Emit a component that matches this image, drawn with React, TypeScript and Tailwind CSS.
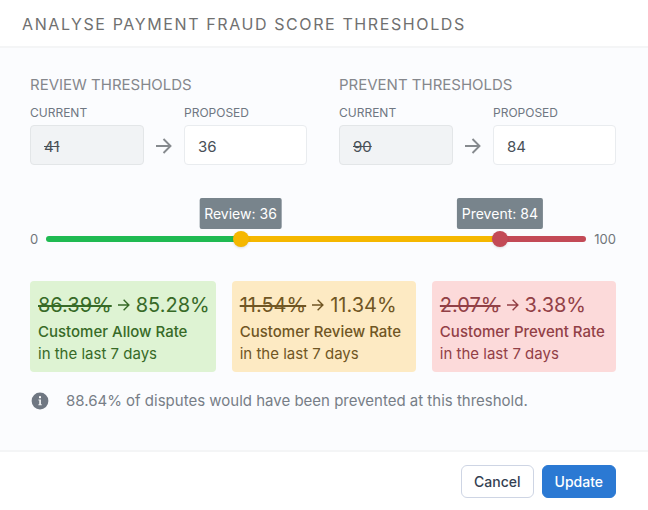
import { useId, useState } from "react";

function Arrow({ className }: { className: string }) {
  return (
    <svg viewBox="0 0 16 16" fill="none" stroke="currentColor" aria-hidden="true" className={className}>
      <path d="M0 8H15M7.5 1L14.5 8L7.5 15" strokeWidth="1.9" />
    </svg>
  );
}

type ThresholdProps = {
  title: string;
  current: number;
  proposed: number;
  onChange: (value: number) => void;
};

function ThresholdFields({ title, current, proposed, onChange }: ThresholdProps) {
  const id = useId();
  return (
    <fieldset className="min-w-0">
      <legend className="text-[15px] leading-5 text-[#85878c]">{title}</legend>
      <div className="mt-2 flex items-end">
        <div className="flex w-[114px] flex-col gap-0.5">
          <label htmlFor={id + "-current"} className="text-xs leading-5 text-[#6f7782]">
            CURRENT
          </label>
          <input
            id={id + "-current"}
            type="text"
            disabled
            value={current}
            className="h-10 w-full rounded border border-[#e3e6e8] bg-[#f1f3f5] px-[13px] pt-0.5 text-[15px] text-[#495057] line-through"
          />
        </div>
        <div className="flex h-10 w-10 shrink-0 items-center justify-center pt-0.5 text-[#868a8e]">
          <Arrow className="size-4" />
        </div>
        <div className="flex min-w-0 flex-1 flex-col gap-0.5">
          <label htmlFor={id + "-proposed"} className="text-xs leading-5 text-[#6f7782]">
            PROPOSED
          </label>
          <input
            id={id + "-proposed"}
            type="text"
            inputMode="numeric"
            value={proposed}
            onChange={(e) => onChange(Math.min(100, Number(e.target.value) || 0))}
            className="h-10 w-full rounded border border-[#e9ecef] bg-white px-[13px] pt-0.5 text-[15px] text-[#495057]"
          />
        </div>
      </div>
    </fieldset>
  );
}

function Marker({ label, value }: { label: string; value: number }) {
  return (
    <output
      className="absolute bottom-[13px] -translate-x-1/2 rounded-xs bg-[#78848c] px-[5px] py-[5px] text-sm leading-[21px] whitespace-nowrap text-white"
      style={{ left: `${value}%` }}
    >
      {label}: {value}
    </output>
  );
}

const rangeBase =
  "pointer-events-none absolute -inset-x-2 -top-[5px] h-4 w-[calc(100%+16px)] appearance-none bg-transparent [&::-webkit-slider-thumb]:pointer-events-auto [&::-webkit-slider-thumb]:size-4 [&::-webkit-slider-thumb]:appearance-none [&::-webkit-slider-thumb]:rounded-full [&::-webkit-slider-thumb]:shadow-sm";

type RateProps = { before: string; after: string; label: string; tone: string };

function RateCard({ before, after, label, tone }: RateProps) {
  return (
    <section className={`flex-1 rounded pt-2 pr-1.5 pb-[7px] pl-2 whitespace-nowrap ${tone}`}>
      <p className="flex items-center text-xl leading-8">
        <s>{before}</s>
        <Arrow className="mx-1.5 size-3" />
        <span>{after}</span>
      </p>
      <h3 className="text-[15px] leading-[22px] font-medium">{label}</h3>
      <p className="text-[15px] leading-[22px]">in the last 7 days</p>
    </section>
  );
}

export default function App() {
  const [review, setReview] = useState(36);
  const [prevent, setPrevent] = useState(84);

  return (
    <div className="flex min-h-screen flex-col bg-white font-['Inter',sans-serif]">
      <header className="border-b-2 border-[#f4f5f6] pt-3 pb-[10px] pl-[22px]">
        <h1 className="text-base leading-6 tracking-widest text-[#707070]">
          ANALYSE PAYMENT FRAUD SCORE THRESHOLDS
        </h1>
      </header>

      <main className="bg-[#fbfcfe] pt-[27px] pr-8 pb-[37px] pl-[30px]">
        <div className="grid grid-cols-2 gap-8">
          <ThresholdFields title="REVIEW THRESHOLDS" current={41} proposed={review} onChange={setReview} />
          <ThresholdFields title="PREVENT THRESHOLDS" current={90} proposed={prevent} onChange={setPrevent} />
        </div>

        <div className="mt-16 flex h-5 items-center gap-2 text-[13px] leading-5 text-[#70757a]">
          <span className="w-2">0</span>
          <div className="relative h-1.5 flex-1">
            <div
              className="h-1.5 rounded-full"
              style={{
                background: `linear-gradient(to right, #1fba52 ${review}%, #f5b700 ${review}% ${prevent}%, #c34a56 ${prevent}%)`,
              }}
            />
            <input
              type="range"
              aria-label="Review threshold"
              value={review}
              onChange={(e) => setReview(Number(e.target.value))}
              className={`${rangeBase} [&::-webkit-slider-thumb]:bg-[#f5b700]`}
            />
            <input
              type="range"
              aria-label="Prevent threshold"
              value={prevent}
              onChange={(e) => setPrevent(Number(e.target.value))}
              className={`${rangeBase} [&::-webkit-slider-thumb]:bg-[#c34a56]`}
            />
            <Marker label="Review" value={review} />
            <Marker label="Prevent" value={prevent} />
          </div>
          <span>100</span>
        </div>

        <div className="mt-8 flex gap-4">
          <RateCard before="86.39%" after="85.28%" label="Customer Allow Rate" tone="bg-[#def3d3] text-[#376a27]" />
          <RateCard before="11.54%" after="11.34%" label="Customer Review Rate" tone="bg-[#fdeac3] text-[#705624]" />
          <RateCard before="2.07%" after="3.38%" label="Customer Prevent Rate" tone="bg-[#fcdada] text-[#924046]" />
        </div>

        <p className="mt-[17px] flex items-center gap-4 text-[15px] leading-6 text-[#777e87]">
          <svg viewBox="0 0 20 20" className="size-5" aria-hidden="true">
            <circle cx="10" cy="10" r="8.4" fill="#6f7782" />
            <rect x="9" y="5.2" width="2" height="2" fill="#fff" />
            <path d="M8.4 8.6H11V13.2H11.8V14.2H8.4V13.2H9.2V9.6H8.4Z" fill="#fff" fillOpacity="0.85" />
          </svg>
          88.64% of disputes would have been prevented at this threshold.
        </p>
      </main>

      <footer className="flex justify-end gap-2 border-t-2 border-[#f4f5f6] pt-[13px] pr-8 pb-3">
        <button type="button" className="h-[33px] rounded-md border border-[#ced5e4] bg-white px-3 text-sm font-medium text-[#343f52]">
          Cancel
        </button>
        <button type="button" className="h-[33px] rounded-md border border-[#2b79d3] bg-[#2b79d3] px-3 text-sm font-medium text-white">
          Update
        </button>
      </footer>
    </div>
  );
}
